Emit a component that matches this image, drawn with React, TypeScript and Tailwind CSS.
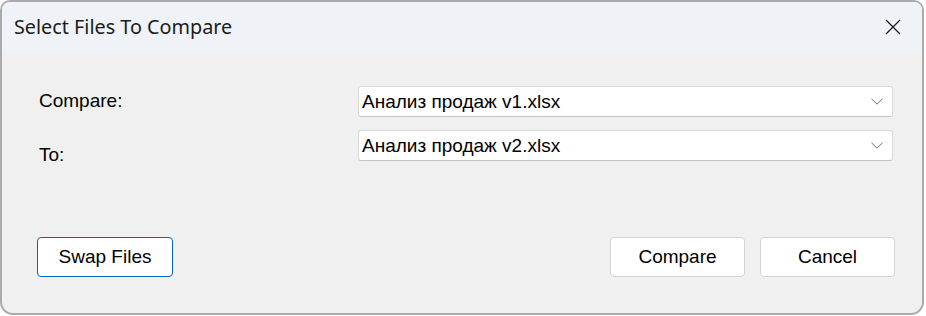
// Select Files To Compare dialog

function CloseIcon() {
  return (
    <svg width="16" height="16" viewBox="0 0 16 16" fill="none">
      <path d="M1 1L15 15M15 1L1 15" stroke="#1a1a1a" strokeWidth="1.3" />
    </svg>
  );
}

function Chevron() {
  return (
    <svg width="12" height="7" viewBox="0 0 12 7" fill="none">
      <path d="M0.5 0.8L6 6.2L11.5 0.8" stroke="#6b6b6b" strokeWidth="1" />
    </svg>
  );
}

function FileSelect({ value }: { value: string }) {
  return (
    <div className="flex h-[31px] flex-1 items-center justify-between rounded-[3px] border border-[#d9d9d9] border-b-[#c4c4c4] bg-white pl-[3px] pr-[9px]">
      <span className="leading-none">{value}</span>
      <Chevron />
    </div>
  );
}

export default function App() {
  const buttonBase =
    "flex h-[40px] items-center justify-center rounded-[4px] bg-white";

  return (
    <div className="h-[316px] w-[926px] bg-white">
      <div className="flex h-[315px] w-[924px] flex-col overflow-hidden rounded-t-[10px] rounded-b-[13px] border-2 border-[#ababab] bg-[#f0f0f0] text-[19px] text-black [font-family:'Liberation_Sans',Arial,sans-serif]">
        {/* Title bar */}
        <div className="flex h-[50px] shrink-0 items-center justify-between bg-[#eff3f7] pl-[12px] pr-[21px]">
          <span className="text-[19.8px] text-[#1b1b1b] [font-family:'Noto_Sans',sans-serif]">
            Select Files To Compare
          </span>
          <CloseIcon />
        </div>

        {/* Body */}
        <div className="flex flex-1 flex-col pl-[35px] pr-[27px]">
          <div className="mt-[34px] flex items-start">
            <span className="ml-[2px] w-[319px] pt-[4px] leading-[22px]">Compare:</span>
            <div className="mr-[2px] flex flex-1">
              <FileSelect value="Анализ продаж v1.xlsx" />
            </div>
          </div>
          <div className="mt-[13px] flex items-start">
            <span className="ml-[2px] w-[319px] pt-[14px] leading-[22px]">To:</span>
            <div className="mr-[2px] flex flex-1">
              <FileSelect value="Анализ продаж v2.xlsx" />
            </div>
          </div>

          <div className="mt-auto mb-[36px] flex items-center justify-between">
            <button className={`${buttonBase} w-[136px] border border-[#0067c0]`}>Swap Files</button>
            <div className="flex gap-[15px]">
              <button className={`${buttonBase} w-[135px] border border-[#d4d4d4]`}>Compare</button>
              <button className={`${buttonBase} w-[135px] border border-[#d4d4d4]`}>Cancel</button>
            </div>
          </div>
        </div>
      </div>
    </div>
  );
}
